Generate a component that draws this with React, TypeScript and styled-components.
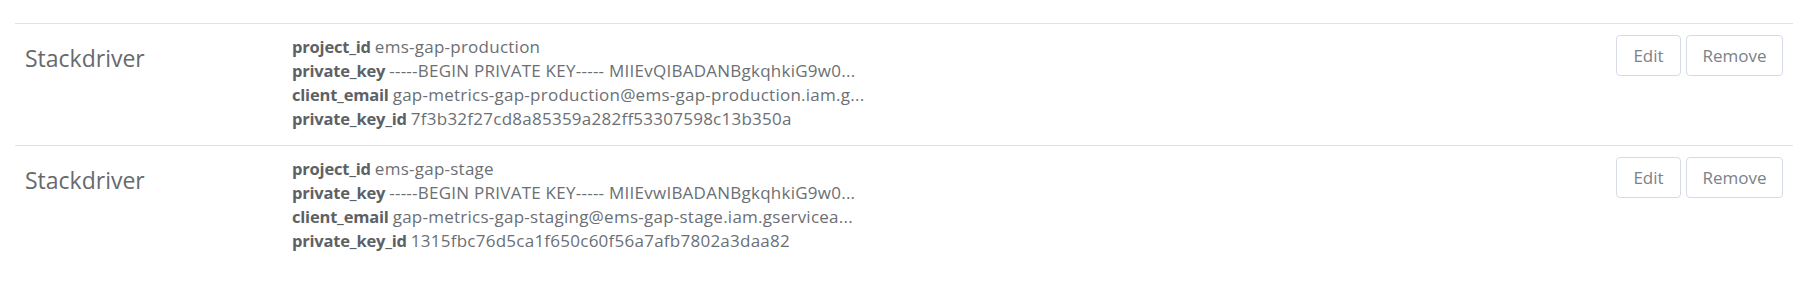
import React from "react";
import styled, { createGlobalStyle } from "styled-components";

const Global = createGlobalStyle`
  html, body { margin: 0; padding: 0; background: #ffffff; }
  body { font-family: "Open Sans", "Noto Sans", sans-serif; }
`;

const List = styled.div`
  padding: 23px 7px 0 15px;
`;

const Row = styled.div`
  display: grid;
  grid-template-columns: 267px 1fr auto;
  align-items: start;
  padding: 11px 10px 14px 10px;
  border-top: 1px solid #e2e2e2;
`;

const Name = styled.div`
  font-size: 23px;
  line-height: 24px;
  color: #666a6e;
  padding-top: 11px;
`;

const Details = styled.div`
  display: flex;
  flex-direction: column;
`;

const Line = styled.div`
  font-size: 17px;
  line-height: 24px;
  color: #6b6f74;
  white-space: nowrap;
  letter-spacing: 0.25px;
`;

const Key = styled.span`
  font-size: 16.5px;
  font-weight: 700;
  color: #5d6166;
  letter-spacing: -0.2px;
  margin-right: 4px;
`;

const Actions = styled.div`
  display: flex;
  gap: 5px;
`;

const Button = styled.button<{ $w: number }>`
  width: ${(p) => p.$w}px;
  height: 41px;
  box-sizing: border-box;
  background: #ffffff;
  border: 1px solid #d5dbe6;
  border-radius: 4px;
  font-family: "Open Sans", "Noto Sans", sans-serif;
  font-size: 17px;
  color: #7d8188;
  padding: 0;
  cursor: pointer;
`;

type Item = { fields: [string, string][] };

const items: Item[] = [
  {
    fields: [
      ["project_id", "ems-gap-production"],
      ["private_key", "-----BEGIN PRIVATE KEY----- MIIEvQIBADANBgkqhkiG9w0..."],
      ["client_email", "gap-metrics-gap-production@ems-gap-production.iam.g..."],
      ["private_key_id", "7f3b32f27cd8a85359a282ff53307598c13b350a"],
    ],
  },
  {
    fields: [
      ["project_id", "ems-gap-stage"],
      ["private_key", "-----BEGIN PRIVATE KEY----- MIIEvwIBADANBgkqhkiG9w0..."],
      ["client_email", "gap-metrics-gap-staging@ems-gap-stage.iam.gservicea..."],
      ["private_key_id", "1315fbc76d5ca1f650c60f56a7afb7802a3daa82"],
    ],
  },
];

export default function App() {
  return (
    <>
      <Global />
      <List>
        {items.map((it, i) => (
          <Row key={i}>
            <Name>Stackdriver</Name>
            <Details>
              {it.fields.map(([k, v]) => (
                <Line key={k}>
                  <Key>{k}</Key>
                  {v}
                </Line>
              ))}
            </Details>
            <Actions>
              <Button $w={65}>Edit</Button>
              <Button $w={97}>Remove</Button>
            </Actions>
          </Row>
        ))}
      </List>
    </>
  );
}
